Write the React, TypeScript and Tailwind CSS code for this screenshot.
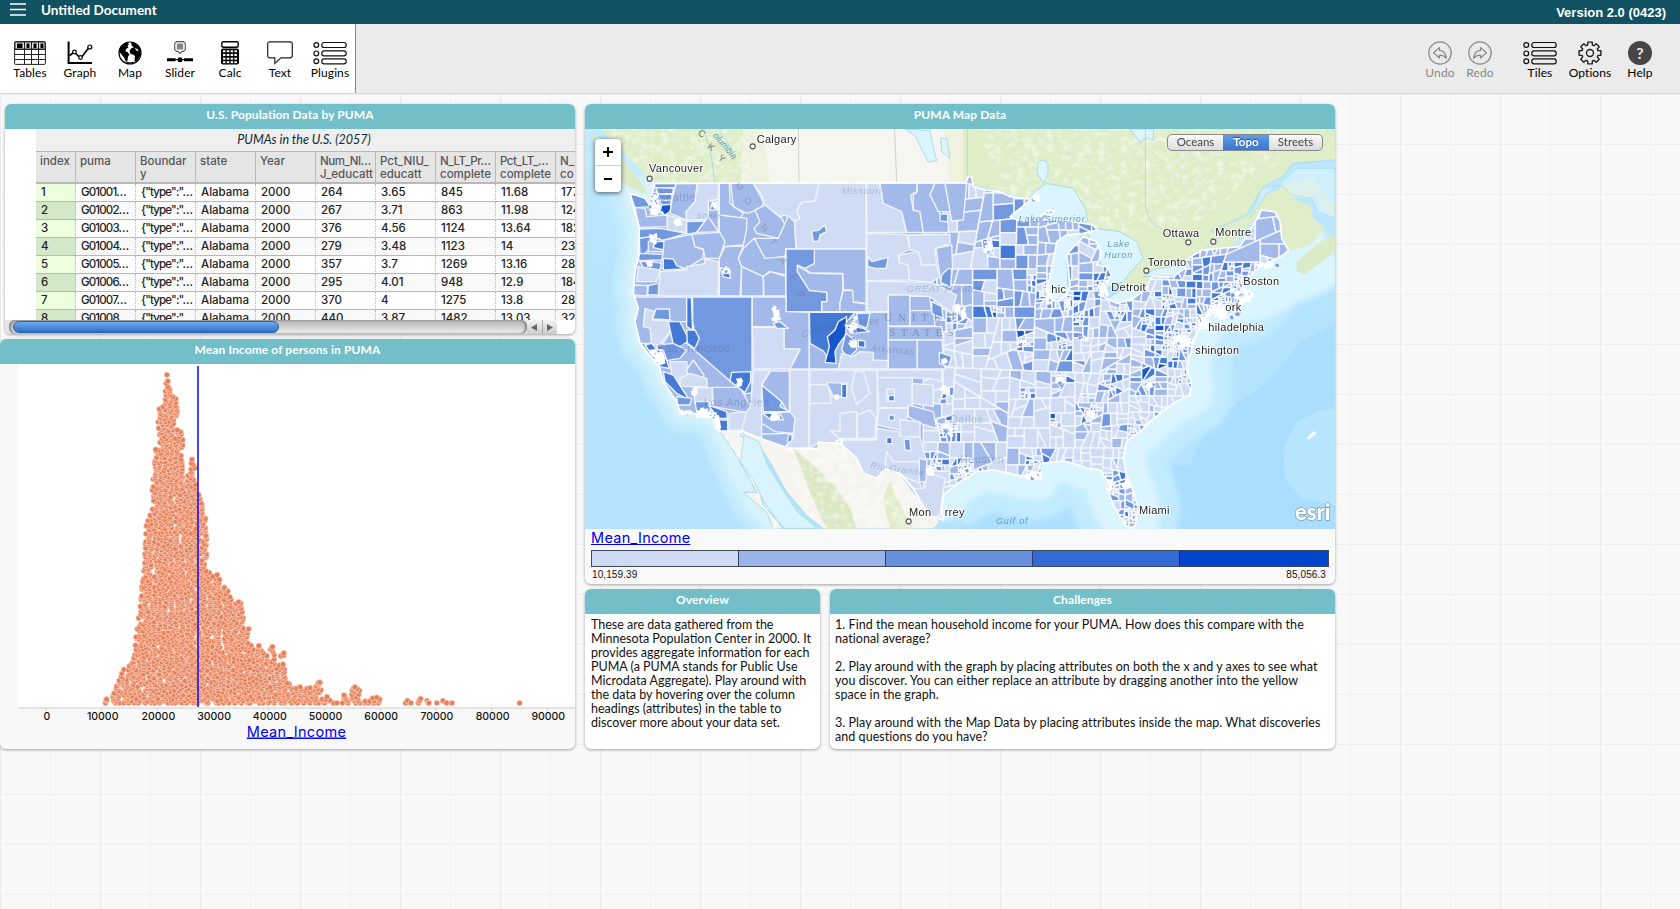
import React from 'react';

type Pt = [number, number];

function makeRandom(seed: number) {
  let s = seed;
  return () => {
    s = (s + 0x6d2b79f5) | 0;
    let t = Math.imul(s ^ (s >>> 15), 1 | s);
    t = (t + Math.imul(t ^ (t >>> 7), 61 | t)) ^ t;
    return ((t ^ (t >>> 14)) >>> 0) / 4294967296;
  };
}

/* ---------- toolbar ---------- */

function TableIcon() {
  return (
    <svg width="32" height="24" viewBox="0 0 32 24" fill="none" stroke="#222" strokeWidth="1">
      <rect x=".6" y=".6" width="30.8" height="22.8" rx="1" fill="#fff" />
      <path d="M1 1h30v7H1z" fill="#ddd" />
      <path d="M1 8.500h30M1 13.500h30M1 18.500h30M10.500 1v22M17.500 1v22M24.500 1v22" />
      <path d="M3 2.500h5.500v4.500H3zM12.500 2.500h3v4.500h-3zM19.500 2.500h3v4.500h-3zM26.500 2.500h3v4.500h-3z" fill="#000" stroke="none" />
    </svg>
  );
}
function GraphIcon() {
  return (
    <svg width="26" height="24" viewBox="0 0 26 24" fill="none" stroke="#000">
      <path d="M1.600 .5v21.400H25" strokeWidth="2" />
      <path d="M2.500 14.500l5-3.500 6 6.500L22 6.500" strokeWidth="1.700" />
      <g fill="#fff" strokeWidth="1.200">
        <circle cx="7.500" cy="11" r="1.800" />
        <circle cx="13.500" cy="16.500" r="1.800" />
        <circle cx="22.800" cy="6" r="2" />
      </g>
    </svg>
  );
}
function MapIcon() {
  return (
    <svg width="24" height="24" viewBox="0 0 24 24">
      <circle cx="12" cy="12" r="11" fill="#fff" stroke="#000" strokeWidth="1.200" />
      <path d="M2 7Q4 2.500 9 1.500L11 3 9.500 5l1 1.500L8 8l-.5 2.500 2 .5 2 2.500-1.500 2-.5 4-1.500 1.500-2-4.500-2.500-3L1.500 11z" fill="#000" />
      <path d="M13 2l3-.5Q21 4 22.500 9l.5 4-2 4-3 3.500-1.500-.5.5-5-2-1.500-2.500-.5-1-3 2-3 2.500-.5-2-1.500z" fill="#000" />
      <path d="M8 20.500l4 1 5-1-3 2.300H9z" fill="#000" />
      <path d="M16.500 7l3 1 1 2.500-2-1z" fill="#fff" />
    </svg>
  );
}
function SliderIcon() {
  return (
    <svg width="26" height="24" viewBox="0 0 26 24">
      <path d="M9.500 .6h7l1.800 1.800v6.200l-1.800 1.800H15l-2 2-2-2H9.500L7.700 8.600V2.400z" fill="#fff" stroke="#555" strokeWidth="1.100" />
      <path d="M9.800 2.500h6.400v6H9.800z" fill="#858585" />
      <path d="M0 17.200h8.500v3H0zM17 17.200h9v3h-9z" />
      <path d="M8 18.700h10" stroke="#000" strokeWidth="1" />
      <circle cx="13" cy="18.700" r="2.500" />
    </svg>
  );
}
function CalcIcon() {
  return (
    <svg width="20" height="24" viewBox="0 0 20 24">
      <rect x="1.800" y=".7" width="16.400" height="5.600" rx="1.500" fill="#fff" stroke="#000" strokeWidth="1.400" />
      <rect x="1" y="7.500" width="18" height="16" rx="2" />
      <g fill="#fff">
        {[9.3, 13, 16.7, 20.2].map((y) =>
          [3, 6.8, 10.6, 14.4].map((x) => <rect key={`${x}-${y}`} x={x} y={y} width="2.500" height="2" />),
        )}
      </g>
    </svg>
  );
}
function TextIcon() {
  return (
    <svg width="26" height="24" viewBox="0 0 26 24" fill="none" stroke="#222" strokeWidth="1.200">
      <path d="M3 .8h20q2.300 0 2.300 2.300v11.500q0 2.300-2.300 2.300H14L7.800 22.500V16.900H3Q.7 16.900.7 14.600V3.100Q.7.800 3 .8z" />
    </svg>
  );
}
function ListIcon() {
  return (
    <svg width="34" height="24" viewBox="0 0 34 24" fill="none" stroke="#111" strokeWidth="1.200">
      {[4, 12.4, 20.3].map((y) => (
        <g key={y}>
          <circle cx="3.300" cy={y} r="2.400" />
          <rect x="8.800" y={y - 2.5} width="24.400" height="5" rx="2.300" />
        </g>
      ))}
    </svg>
  );
}
function UndoIcon({ flip }: { flip?: boolean }) {
  return (
    <svg width="24" height="24" viewBox="0 0 24 24" fill="none" stroke="#888" strokeWidth="1.200">
      <circle cx="12" cy="12" r="11.200" />
      <path transform={flip ? 'translate(24 0) scale(-1 1)' : undefined} d="M5.500 11.800l6-5.200v2.800q6.300.3 6.800 8-2.300-3.300-6.800-3.200V17z" strokeLinejoin="round" />
    </svg>
  );
}
function GearIcon() {
  const pts: string[] = [];
  for (let i = 0; i < 8; i++) {
    const a = (i * Math.PI) / 4 - Math.PI / 2;
    [[-0.29, 8.3], [-0.2, 11.1], [0.2, 11.1], [0.29, 8.3]].forEach(([d, r]) => pts.push(`${12 + r * Math.cos(a + d)},${12 + r * Math.sin(a + d)}`));
  }
  return (
    <svg width="24" height="24" viewBox="0 0 24 24" fill="none" stroke="#222" strokeWidth="1.400" strokeLinejoin="round">
      <polygon points={pts.join(' ')} />
      <circle cx="12" cy="12" r="3.500" />
    </svg>
  );
}
function HelpIcon() {
  return (
    <span className="flex h-6 w-6 items-center justify-center rounded-full bg-[#464646] font-['Lato'] text-[16px] font-bold leading-none text-[#ececec]">?</span>
  );
}

function Tool({ icon, label, className = 'w-[50px]' }: { icon: React.ReactNode; label: string; className?: string }) {
  return (
    <button className={`flex shrink-0 flex-col items-center whitespace-nowrap pt-[17px] ${className}`}>
      <span className="flex h-6 items-center">{icon}</span>
      <span className="text-[12px] leading-[15px] tracking-[0.1px]">{label}</span>
    </button>
  );
}

/* ---------- shared panel ---------- */

function Panel({ title, className, children }: { title: string; className: string; children: React.ReactNode }) {
  return (
    <section className={`flex flex-col overflow-hidden rounded-[6px] shadow-[0_1px_3px_rgba(0,0,0,0.35)] ${className}`}>
      <h2 className="flex h-[25px] shrink-0 items-center justify-center bg-[#72bfca] pb-[3px] text-[12px] font-bold tracking-[0.1px] text-white">{title}</h2>
      {children}
    </section>
  );
}

/* ---------- case table ---------- */

const heads = [['puma'], ['Boundar', 'y'], ['state'], ['Year'], ['Num_NI…', 'J_educatt'], ['Pct_NIU_', 'educatt'], ['N_LT_Pr…', 'complete'], ['Pct_LT_…', 'complete'], ['N_', 'co']];
const rows = [
  ['G01001…', '264', '3.65', '845', '11.68', '177'],
  ['G01002…', '267', '3.71', '863', '11.98', '124'],
  ['G01003…', '376', '4.56', '1124', '13.64', '182'],
  ['G01004…', '279', '3.48', '1123', '14', '233'],
  ['G01005…', '357', '3.7', '1269', '13.16', '283'],
  ['G01006…', '295', '4.01', '948', '12.9', '184'],
  ['G01007…', '370', '4', '1275', '13.8', '280'],
  ['G01008…', '440', '3.87', '1482', '13.03', '321'],
];

function CaseTable() {
  return (
    <Panel title="U.S. Population Data by PUMA" className="ml-[5px] h-[230px] bg-white">
      <div className="ml-[31px] h-[191px] overflow-hidden font-['Inter']">
        <div className="flex h-[22px] items-center justify-center bg-[#efefef] pr-[3px] font-['Lato'] text-[12.500px] italic text-[#0e2a36]">PUMAs in the U.S. (2057)</div>
        <div className="flex h-[33px] w-[620px] border-b-2 border-t border-[#b8b8b8] bg-[#e5e5e5] text-[11.500px] font-medium leading-[12.500px] text-[#555]">
          <div className="w-[40px] border-r border-[#b8b8b8] pl-1 pt-[3px]">index</div>
          {heads.map((h, i) => (
            <div key={i} className="w-[60px] overflow-hidden whitespace-nowrap border-r border-[#b8b8b8] pl-1 pt-[3px]">
              {h.map((l) => (
                <div key={l} className={l.includes('…') ? 'tracking-[-0.45px]' : ''}>{l}</div>
              ))}
            </div>
          ))}
        </div>
        {rows.map((r, i) => (
          <div key={i} className={`flex h-[18px] w-[620px] text-[11.500px] font-medium leading-[17px] text-[#222] ${i % 2 ? 'bg-[#f9f9f9]' : 'bg-white'}`}>
            <div className={`w-[40px] border-b border-r border-b-[#b8b8b8] border-r-[#b8b8b8] pl-[5px] [border-right-style:dotted] ${i % 2 ? 'bg-[#d3e8c8]' : 'bg-[#ebffdf]'}`}>{i + 1}</div>
            {[r[0], '{"type":"…', 'Alabama', '2000', ...r.slice(1)].map((c, j) => (
              <div key={j} className={`w-[60px] overflow-hidden whitespace-nowrap border-b border-r border-b-[#b8b8b8] border-r-[#b8b8b8] pl-[5px] [border-right-style:dotted] ${c.includes('…') ? 'tracking-[-0.85px]' : ''}`}>{c}</div>
            ))}
          </div>
        ))}
      </div>
      <div className="flex h-[14px] w-[552px] bg-[#e4e4e4]">
        <div className="ml-1 flex h-[14px] w-[518px] shrink-0 items-center rounded-[6px] bg-gradient-to-b from-[#b0b0b0] to-[#f2f2f2] pl-1 shadow-[inset_2px_0_2px_#888,inset_-2px_0_2px_#888]">
          <div className="h-[12px] w-[266px] rounded-full border border-[#2a5fae] bg-gradient-to-b from-[#6fa9f3] to-[#2f6fc4]" />
        </div>
        <div className="flex h-[14px] flex-1 bg-gradient-to-b from-[#f4f4f4] to-[#ccc]">
          <div className="flex flex-1 items-center justify-center border-r border-[#aaa]">
            <svg width="6" height="7"><path d="M6 0v7L0 3.500z" fill="#666" /></svg>
          </div>
          <div className="flex flex-1 items-center justify-center">
            <svg width="6" height="7"><path d="M0 0v7l6-3.500z" fill="#666" /></svg>
          </div>
        </div>
      </div>
    </Panel>
  );
}

/* ---------- dot plot ---------- */

const envelope: Pt[] = [
  [272, 1119], [283, 1108], [300, 1095], [318, 1045], [332, 1008], [352, 1000], [365, 895], [378, 765], [385, 680], [390, 560], [402, 545], [408, 350], [417, 350], [420, 234], [437, 222],
  [442, 130], [454, 128], [456, 180], [462, 203], [470, 210], [472, 295], [485, 308], [489, 435], [502, 430], [508, 390], [517, 382], [521, 490], [533, 493], [540, 545], [548, 550],
  [550, 722], [560, 730], [580, 728], [588, 770], [602, 772], [613, 803], [625, 822], [636, 815], [642, 822], [650, 890], [661, 895], [667, 945], [680, 945], [693, 950], [706, 990],
  [715, 950], [725, 940], [735, 1010], [745, 965], [754, 970], [760, 1055], [772, 1062], [780, 1085], [795, 1050], [805, 1080], [820, 1075], [830, 1062], [851, 1050], [858, 1105],
  [878, 1100], [892, 1117], [898, 1125], [908, 1125], [913, 1095], [930, 1107], [937, 1069], [957, 1081], [965, 1105], [980, 1113], [995, 1100], [1012, 1105], [1016, 1130],
];
const strays: Pt[] = [[1078, 1119], [1083, 1112], [1092, 1119], [1112, 1119], [1114, 1113], [1118, 1106], [1135, 1112], [1138, 1119], [1140, 1119], [1161, 1119], [1177, 1112], [1187, 1119], [1201, 1119], [1381, 1119]];
const SX = 2.6576;

function topAt(x: number) {
  for (let i = 1; i < envelope.length; i++) {
    const [x0, y0] = envelope[i - 1];
    const [x1, y1] = envelope[i];
    if (x <= x1) return y0 + ((y1 - y0) * (x - x0)) / (x1 - x0);
  }
  return 2000;
}

const dots: Pt[] = (() => {
  const rnd = makeRandom(7);
  const out: Pt[] = [];
  for (let y = 1119; y > 120; y -= 6.2) {
    for (let bx = 272; bx < 1014; bx += 14.2) {
      const x = bx + (rnd() - 0.5) * 14;
      const yy = y === 1119 ? y : y + (rnd() - 0.5) * 4;
      if (x >= 270 && yy >= topAt(x) - 2) out.push([x / SX, yy / 3 + 330]);
    }
  }
  strays.forEach(([x, y]) => out.push([x / SX, y / 3 + 330]));
  return out;
})();

function DotPlot() {
  return (
    <Panel title="Mean Income of persons in PUMA" className="h-[410px] bg-[#f8f8f8]">
      <svg width="575" height="385" viewBox="0 364 575 385" className="font-['Inter']">
        <rect x="18" y="364" width="557" height="344" fill="#fff" />
        <path d="M18 708H575" stroke="#dcdcdc" strokeWidth="1.500" />
        <g fill="#e6805a" stroke="#fbd6c6" strokeWidth=".7">
          {dots.map(([x, y], i) => (
            <circle key={i} cx={x.toFixed(1)} cy={y.toFixed(1)} r="2.800" />
          ))}
        </g>
        <path d="M198 366V707" stroke="#1a12f0" strokeWidth="1.600" />
        {[0, 1, 2, 3, 4, 5, 6, 7, 8, 9].map((i) => (
          <g key={i}>
            <path d={`M${46 + i * 55.7} 708v3`} stroke="#ccc" />
            <text x={47 + i * 55.7} y="719.500" textAnchor="middle" fontSize="10.500" fontWeight="500" fill="#111">{i * 10000}</text>
          </g>
        ))}
        <text x="296.500" y="736.500" textAnchor="middle" fontSize="14.500" letterSpacing=".3" fill="#0000f0" textDecoration="underline">Mean_Income</text>
      </svg>
    </Panel>
  );
}

/* ---------- choropleth map ---------- */

const shade = ['#d0dcf4', '#a2b9e9', '#7298df', '#447ad6', '#1757cb'];

const pacific = '222,265 215,310 215,340 195,310 150,295 178,400 175,490 165,530 160,595 175,640 165,680 180,745 200,770 240,820 250,860 290,920 300,950 380,960 400,970 420,1010';
const atlantic =
  '1090,1275 1085,1250 1090,1200 1140,1160 1190,1130 1240,1125 1290,1135 1330,1145 1370,1150 1380,1105 1450,1098 1480,1105 1520,1120 1560,1125 1585,1160 1585,1190 1600,1230 1620,1265 1645,1298 1665,1295 1675,1240 1660,1190 1640,1140 1630,1090 1640,1040 1680,1010 1710,980 1740,955 1780,925 1830,900 1835,870 1820,815 1830,780 1845,725 1860,700 1880,665 1930,640 1990,620 2020,600 1990,580 2000,550 2040,515 2110,480 2125,465';
const usOutline = `${pacific} 490,1010 620,1060 715,1060 715,1042 780,1045 830,1090 850,1135 890,1150 915,1122 960,1135 1000,1180 1020,1220 1055,1265 ${atlantic} 2105,430 2100,380 2085,350 2045,345 2020,390 1980,455 1865,465 1810,500 1815,520 1780,545 1715,545 1700,580 1660,610 1610,625 1570,605 1570,580 1595,540 1580,515 1550,510 1565,475 1550,440 1510,425 1485,450 1460,480 1465,520 1470,570 1460,600 1430,620 1410,610 1402,580 1415,520 1425,470 1430,440 1460,420 1510,415 1550,405 1540,390 1480,380 1430,375 1390,375 1425,350 1405,345 1370,375 1325,380 1290,365 1355,312 1290,305 1260,290 1215,285 1180,275 1175,245 1165,245 1158,262`;

const metros: [number, number, number][] = [
  [1225, 460, 16], [1410, 590, 26], [1570, 575, 26], [1360, 550, 14], [1245, 640, 14], [1325, 750, 20], [1450, 750, 18], [1440, 850, 16], [1535, 950, 22], [1600, 870, 16], [1700, 865, 20],
  [1790, 740, 40], [1860, 685, 30], [1930, 650, 45], [1990, 600, 35], [1980, 560, 20], [1620, 650, 18], [1700, 680, 18], [1500, 670, 18], [1105, 1000, 24], [1160, 1130, 28], [1360, 1120, 24],
  [1590, 1180, 24], [1660, 1260, 24], [1640, 1170, 14], [1090, 890, 14], [1130, 680, 14], [1420, 980, 14], [1340, 900, 12], [1070, 1100, 18], [1810, 840, 16], [1660, 1000, 14], [1760, 620, 18],
  [1955, 510, 14], [1470, 620, 18], [1290, 1000, 10],
];

const area = (p: Pt[]) => Math.abs(p.reduce((s, [x, y], i) => s + x * p[(i + 1) % p.length][1] - p[(i + 1) % p.length][0] * y, 0)) / 2;

/* Districts come from repeatedly cutting the land in two, with smaller pieces around the cities. */
const cells: { pts: string; c: number }[] = (() => {
  const rnd = makeRandom(2024);
  const out: { pts: string; c: number }[] = [];
  const visit = (poly: Pt[], depth: number) => {
    const xs = poly.map((p) => p[0]);
    const ys = poly.map((p) => p[1]);
    const x = xs.reduce((a, b) => a + b) / xs.length;
    const y = ys.reduce((a, b) => a + b) / ys.length;
    const w = Math.max(...xs) - Math.min(...xs);
    const h = Math.max(...ys) - Math.min(...ys);
    let near = 9;
    metros.forEach(([mx, my, r]) => (near = Math.min(near, Math.hypot(mx - x, my - y) / r)));
    let side = 46 - Math.max(0, x - 1060) * 0.022;
    if (x > 1400 && y > 540) side -= 5;
    if (x < 1330 && y < 560) side += 10;
    if (y > 800 && x < 1560) side += 4;
    if (x > 1985 && y < 500) side = 70;
    if (near < 1.1) side = 12;
    else if (near < 2.2) side = 22;
    const target = side * side * (0.75 + rnd() * 0.9);
    if (depth < 16 && area(poly) > target) {
      const tilt = depth < 3 ? 0.04 : rnd() < 0.45 ? 0 : (rnd() - 0.5) * (y > 620 || x > 1500 ? 1.1 : 0.6);
      const a = (w > h ? 0 : Math.PI / 2) + tilt;
      const nx = Math.cos(a);
      const ny = Math.sin(a);
      const proj = poly.map((p) => p[0] * nx + p[1] * ny);
      const lo = Math.min(...proj);
      const lim = lo + (Math.max(...proj) - lo) * (0.36 + rnd() * 0.28);
      const mid: Pt[] = [];
      const A: Pt[] = [];
      const B: Pt[] = [];
      poly.forEach((p, i) => {
        const j = (i + 1) % poly.length;
        const fp = proj[i] - lim;
        const fq = proj[j] - lim;
        (fp <= 0 ? A : B).push(p);
        if (fp <= 0 !== fq <= 0) {
          const t = fp / (fp - fq);
          const q: Pt = [p[0] + (poly[j][0] - p[0]) * t, p[1] + (poly[j][1] - p[1]) * t];
          mid.push(q);
          A.push(q);
          B.push(q);
        }
      });
      visit(A, depth + 1);
      visit(B, depth + 1);
      return;
    }
    const v = rnd();
    let c = y < 760 ? (v < 0.2 ? 0 : v < 0.76 ? 1 : v < 0.95 ? 2 : 3) : v < 0.8 ? 0 : v < 0.95 ? 1 : 2;
    if (x > 1530 && x < 1790 && y > 570 && y < 800) c = v < 0.7 ? 0 : v < 0.92 ? 1 : 2;
    if (x < 1330 && y > 660 && y < 790) c = v < 0.6 ? 0 : v < 0.9 ? 1 : 2;
    if (x > 1560 && x < 1830 && y > 830 && y < 910) c = v < 0.45 ? 0 : v < 0.85 ? 1 : 2;
    if (near < 2.2) c = v < 0.22 ? 0 : v < 0.52 ? 1 : v < 0.78 ? 2 : v < 0.95 ? 3 : 4;
    if (x > 1840 && x < 2010 && y > 440 && y < 620) c = v < 0.4 ? 1 : v < 0.8 ? 2 : 3;
    if (x > 1985 && y < 500) c = v < 0.5 ? 0 : 1;
    const rough = poly.map(([px, py]) => `${px.toFixed(0)},${py.toFixed(0)}`);
    out.push({ pts: rough.join(' '), c });
  };
  visit([[1030, 230], [2140, 230], [2140, 1310], [1030, 1310]], 0);
  return out;
})();

const west: [number, string][] = [
  [2, '150,297 215,310 215,335 165,338'],
  [1, '165,338 195,340 200,365 262,360 262,395 178,397'],
  [2, '224,266 288,266 285,278 224,278'],
  [2, '228,278 280,280 278,296 232,296'],
  [2, '232,298 276,298 274,316 238,316'],
  [2, '238,316 274,316 270,335 245,330'],
  [4, '245,330 275,328 270,350 255,360 240,350'],
  [1, '288,266 352,265 345,320 318,350 320,375 270,355 275,320'],
  [0, '262,360 320,378 318,412 262,405'],
  [0, '352,265 415,265 415,320 390,315 385,375 320,375 318,350 345,320'],
  [1, '385,320 415,312 415,410 385,380'],
  [3, '400,315 412,320 412,345 390,345'],
  [2, '320,380 375,378 350,412 320,418'],
  [1, '350,412 385,365 415,410'],
  [1, '418,265 448,265 450,325 490,355 480,370 418,360'],
  [1, '452,265 520,265 550,320 545,340 500,355 460,335'],
  [1, '418,360 500,370 500,400 490,450 430,455 418,410'],
  [0, '520,265 717,265 705,318 665,322 650,348 660,370 643,380 615,360 600,365 555,330 545,300'],
  [0, '717,265 858,265 858,462 650,462 643,380 660,370 650,348 665,322 705,318'],
  [1, '525,345 555,330 605,370 617,392 595,430 530,415 522,400 540,380'],
  [1, '523,430 595,430 625,362 643,380 648,460 618,462 615,485 555,492 530,450'],
  [2, '695,408 715,406 735,390 740,410 720,420 716,438 700,440'],
  [2, '178,402 240,400 318,415 250,436 215,425 178,430'],
  [2, '178,430 215,425 205,465 180,490'],
  [1, '205,440 235,430 250,440 252,470 205,470'],
  [3, '225,440 255,440 252,465 220,458'],
  [2, '178,475 252,478 248,495 175,497'],
  [1, '252,435 335,418 345,455 372,465 368,490 320,520 240,520 250,470'],
  [2, '180,500 215,500 245,505 238,530 190,518'],
  [3, '250,490 280,492 290,512 315,522 250,525'],
  [1, '335,418 420,412 435,440 418,490 375,490 370,462 345,455'],
  [0, '320,515 375,505 372,492 415,500 415,603 235,603 240,530 320,525'],
  [0, '175,515 240,525 230,560 170,560'],
  [1, '160,570 203,572 200,603 160,600'],
  [2, '205,572 237,565 235,600 203,600'],
  [1, '418,490 435,455 490,453 475,490 485,515 480,603 418,603'],
  [3, '420,518 445,525 452,550 430,545'],
  [1, '490,460 523,430 555,490 615,485 618,540 568,530 550,545 485,515 475,490'],
  [1, '485,515 550,545 550,603 483,603'],
  [1, '550,545 570,530 618,545 618,603 552,603'],
  [2, '618,462 858,462 858,650 618,650'],
  [1, '703,462 858,462 858,625 820,620 815,585 790,585 788,535 690,533 675,520 703,505'],
  [1, '652,512 690,535 788,537 788,590 780,625 780,650 725,650 725,620 740,620 740,592 688,587 652,530'],
  [1, '790,587 818,587 820,622 858,627 858,650 780,650 780,625'],
  [2, '618,462 703,462 703,505 675,520 652,510 652,530 688,587 740,592 740,620 725,620 725,650 618,650'],
  [1, '165,606 320,606 320,680 290,680 250,745 180,745 165,680'],
  [0, '195,640 225,650 215,675 290,680 240,750 215,750 210,700 190,695'],
  [2, '228,642 268,642 270,675 218,672'],
  [3, '320,608 334,608 338,705 320,695'],
  [2, '338,606 516,606 516,893 495,897 320,745 345,720 338,680'],
  [3, '265,680 300,680 320,720 330,735 300,755 280,750'],
  [3, '320,705 345,705 358,730 345,760 322,745'],
  [3, '195,750 215,745 232,765 215,778'],
  [2, '230,750 280,745 320,765 300,790 240,800'],
  [3, '225,765 250,765 268,820 240,815'],
  [0, '270,800 320,800 325,850 300,870 275,840'],
  [1, '320,825 340,795 372,840 365,865 330,860'],
  [0, '300,850 330,835 380,850 382,876 300,874'],
  [3, '250,830 280,840 300,872 328,915 290,895 255,860'],
  [0, '340,878 397,878 397,925 345,925'],
  [1, '397,877 480,877 512,935 500,952 400,935'],
  [2, '290,905 335,910 330,930 292,930'],
  [2, '345,920 385,920 398,945 350,950'],
  [3, '385,930 440,950 442,970 415,970'],
  [3, '418,975 443,975 443,1008 420,1008'],
  [0, '447,955 500,950 500,980 490,1005 447,1005'],
  [3, '455,832 512,830 512,860 495,893 450,858'],
  [1, '517,606 618,606 618,650 688,652 688,822 630,822 660,765 612,762 612,695 517,695'],
  [0, '517,697 612,697 612,762 660,762 630,822 520,822'],
  [2, '580,685 600,680 625,700 590,700'],
  [1, '688,652 925,652 925,822 688,822'],
  [3, '688,652 825,652 800,680 770,695 750,800 730,768 690,745'],
  [4, '775,680 800,665 797,720 775,750 765,770 768,805 735,802 748,755 742,725 765,705'],
  [2, '797,715 825,735 830,765 805,790 785,765'],
  [3, '795,690 850,700 868,710 815,715'],
  [3, '835,735 855,738 855,758 835,755'],
  [2, '830,655 870,655 860,700 835,690'],
  [0, '785,775 820,785 840,770 880,772 880,795 925,797 925,822 775,822'],
  [0, '520,825 570,825 545,870 545,1035 485,1005 500,950 512,935'],
  [1, '572,828 628,828 628,960 605,920 545,870'],
  [2, '545,870 605,920 600,935 630,950 550,950'],
  [1, '545,955 650,950 640,1015 585,1010 545,985'],
  [3, '548,955 600,955 610,975 570,972'],
  [1, '545,1017 640,1015 635,1035 615,1055 545,1032'],
  [2, '625,1020 636,1018 636,1042 622,1040'],
  [0, '630,825 687,825 687,1060 640,1060 620,1055 640,1030 645,970 630,950'],
  [0, '690,825 892,825 892,1035 782,1035 780,1045 715,1045 687,1060'],
  [0, '690,868 745,870 755,925 690,925'],
  [1, '740,862 800,865 800,905 760,905'],
  [3, '785,868 800,868 800,908 785,908'],
  [0, '825,830 815,880 830,928 870,895 850,830'],
  [0, '750,1008 780,1008 780,955 830,950 830,1030 780,1030'],
  [0, '832,960 870,945 888,970 885,1030 832,1030'],
  [0, '892,825 1085,825 1085,860 1050,850 892,848'],
  [0, '892,848 997,848 997,938 897,938'],
  [0, '997,865 1060,870 1060,935 997,925'],
  [0, '897,940 985,940 980,975 960,1005 892,990'],
  [1, '985,930 1060,950 1070,1000 1020,985 985,965'],
  [0, '960,975 1020,980 1020,1025 962,1025'],
  [0, '782,1035 890,1035 890,1000 955,1010 960,1025 1020,1027 1040,1100 1018,1160 1035,1215 1000,1190 915,1130 890,1170 820,1140'],
  [0, '920,1070 940,1100 1018,1100 1020,1165 960,1140 915,1120'],
  [1, '1018,1090 1040,1095 1040,1160 1018,1160'],
  [0, '1040,1130 1095,1150 1080,1260 1055,1270 1000,1180 1035,1180'],
  [2, '972,1033 990,1033 992,1068 975,1065'],
  [0, '920,882 943,882 943,918 922,918'],
  [3, '926,902 943,902 943,918 926,918'],
  [2, '927,960 943,960 943,976 927,976'],
  [3, '920,1028 936,1028 936,1046 920,1046'],
  [0, '860,265 898,265 910,325 965,350 978,412 860,412'],
  [1, '900,265 1012,265 1010,290 992,300 1000,345 1020,350 1030,412 980,412 965,350 910,325'],
  [1, '1012,265 1065,265 1050,300 1070,330 1080,355 1105,385 1105,412 1030,412 1020,350 1000,345 1000,300 1012,290'],
  [1, '1065,265 1095,265 1112,350 1075,350 1050,300'],
  [2, '1080,357 1103,357 1103,380 1080,378'],
  [1, '1095,265 1160,265 1150,375 1115,378'],
  [0, '860,415 980,418 990,462 955,480 958,503 985,510 988,555 860,557'],
  [2, '863,485 876,500 925,487 918,520 885,520 863,514'],
  [0, '985,420 1110,418 1110,445 1065,460 1070,510 1025,510 1015,470 990,465'],
  [0, '958,480 1015,470 1025,510 1070,510 1080,545 1055,562 988,555 985,510 958,503'],
  [1, '1068,460 1115,450 1118,520 1110,577 1082,560'],
  [2, '1085,540 1105,520 1115,522 1112,577 1082,562'],
  [0, '862,558 1055,562 1130,600 1115,655 1050,605 925,600 925,650 862,650'],
  [1, '925,600 990,600 990,693 925,693'],
  [1, '990,603 1048,605 1055,647 990,647'],
  [1, '990,647 1060,647 1065,693 990,693'],
  [2, '1055,620 1085,635 1090,670 1055,655'],
  [1, '925,695 1085,695 1090,735 925,735'],
  [1, '925,735 1012,735 1012,822 925,822'],
  [1, '1012,735 1085,735 1095,822 1012,822'],
  [2, '1078,772 1115,785 1105,815 1078,805'],
];

const specks: [number, number, number, number][] = [
  [225, 310, 16, 30], [225, 345, 22, 16], [222, 430, 14, 14], [405, 330, 6, 8], [437, 530, 9, 12], [590, 655, 12, 26], [820, 685, 14, 30], [240, 790, 16, 24], [218, 775, 14, 12], [345, 890, 8, 12],
  [480, 862, 12, 9], [585, 965, 14, 10], [380, 955, 30, 14], [410, 985, 8, 26], [1105, 1005, 16, 18], [770, 905, 9, 7], [1090, 795, 9, 7], [1132, 640, 10, 14], [292, 382, 10, 7], [208, 508, 8, 6],
  [1225, 460, 14, 18], [1410, 600, 10, 26], [1570, 585, 16, 14], [1930, 650, 60, 22], [1985, 605, 38, 22], [1870, 685, 28, 18], [1800, 740, 30, 18], [1160, 1130, 16, 12], [1360, 1140, 26, 14],
  [1590, 1180, 9, 20], [1535, 955, 14, 12], [2060, 510, 40, 8], [1050, 1125, 10, 14], [1325, 745, 12, 12], [820, 745, 12, 18], [1370, 310, 16, 8], [1150, 660, 8, 24], [1095, 885, 12, 10], [780, 1040, 7, 7],
  [320, 952, 22, 5], [1460, 630, 8, 12], [1710, 870, 14, 8], [1440, 860, 8, 12], [1640, 1165, 10, 14], [1510, 730, 12, 8],
];

const scatter: { pts: string; c: string }[] = (() => {
  const rnd = makeRandom(99);
  const out: { pts: string; c: string }[] = [];
  specks.forEach(([x, y, rx, ry]) => {
    const n = Math.round((rx * ry) / 20) + 6;
    for (let i = 0; i < n; i++) {
      const cx = x + (rnd() + rnd() - 1) * rx;
      const cy = y + (rnd() + rnd() - 1) * ry;
      const s = 3 + rnd() * 6;
      const p = [0, 1, 2, 3].map((k) => `${(cx + Math.cos(k * 1.57 + rnd()) * s).toFixed(0)},${(cy + Math.sin(k * 1.57 + rnd()) * s).toFixed(0)}`);
      out.push({ pts: p.join(' '), c: rnd() < 0.88 ? '#fff' : shade[2] });
    }
  });
  return out;
})();

function City({ x, y, children, dot }: { x: number; y: number; children: string; dot?: Pt }) {
  return (
    <>
      {dot && <circle cx={dot[0]} cy={dot[1]} r="7.500" fill="#fff" stroke="#555" strokeWidth="3.500" />}
      <text x={x} y={y} fontSize="33" letterSpacing=".9" fill="#222" stroke="#fff" strokeWidth="5" strokeLinejoin="round" paintOrder="stroke">{children}</text>
    </>
  );
}

function PumaMap() {
  return (
    <svg width="750" height="400" viewBox="15 102 2250 1200" className="block font-['Liberation_Sans']">
      <defs>
        <clipPath id="us"><polygon points={usOutline} /></clipPath>
        <filter id="soft" x="-20%" y="-20%" width="140%" height="140%"><feGaussianBlur stdDeviation="9" /></filter>
        <filter id="terrain" x="0" y="0" width="100%" height="100%">
          <feTurbulence type="fractalNoise" baseFrequency=".045 .055" numOctaves="5" seed="4" />
          <feColorMatrix values="0 0 0 0 1  0 0 0 0 1  0 0 0 0 1  2.4 0 0 0 -1.05" />
          <feComposite in2="SourceGraphic" operator="in" />
        </filter>
        <linearGradient id="pac" x1="0" x2="0" y1="0" y2="1">
          <stop offset="0" stopColor="#c0eafd" />
          <stop offset=".5" stopColor="#b3e3fd" />
          <stop offset="1" stopColor="#b3e3fd" />
        </linearGradient>
      </defs>
      <rect x="15" y="102" width="2250" height="1200" fill="url(#pac)" />
      <g fill="#abddfe">
        <path d="M2265 690L2160 740 2110 810 2040 880 1890 980 1850 1060 1830 1110 1780 1110 1790 1220 1760 1302H2265z" />
        <path d="M1140 1302L1240 1240 1380 1180 1460 1190 1510 1240 1520 1302z" opacity=".8" />
      </g>
      <path d="M2110 1060l40-80 60-30 55-10v290l-100-20-50-60z" fill="#b7e5fe" />
      <path d="M2180 1030l20-22 12 6-26 22z" fill="#eefaff" />
      <g fill="none" strokeLinejoin="round" filter="url(#soft)">
        <polyline points={atlantic} stroke="#c2ebff" strokeWidth="250" />
        <polyline points={atlantic} stroke="#dbf5fe" strokeWidth="130" />
        <path d="M2000 600L2180 520 2265 480" stroke="#dbf5fe" strokeWidth="170" />
        <polyline points={`60,150 140,280 ${pacific} 460,1110 520,1230 590,1302`} stroke="#c6ecfd" strokeWidth="120" />
        <polyline points={`60,150 140,280 ${pacific} 460,1110 520,1230 590,1302`} stroke="#d8f3fc" strokeWidth="50" />
      </g>
      <g>
        <path d="M65 102L100 150 150 190 210 255 222 266 1160 262 1355 312 1290 400 1450 430 1560 480 1640 590 1600 620 1700 590 1820 500 1880 460 2000 365 2060 300 2140 260 2200 250 2220 275 2190 308 2130 310 2190 330 2200 370 2235 400 2190 450 2130 468 2090 380 2050 340 1950 460 1860 470 2000 365 2050 280 2110 245 2140 205 2265 195V102z" fill="#dfedc9" />
        <path d="M500 102H1090L1140 265H520z" fill="#f6f5f0" />
        <path d="M490 102l60 0 20 165-90 0zM1090 102h60v162h-40z" fill="#eef2df" />
        <path d="M30 110l60 40 60 70 50 65-10 12-55-30-70-80z" fill="#dbeac6" />
        <path d="M2150 500l70-60 45-20v50l-90 68-25-10zM2200 270l65 60v40l-40-30z" fill="#dcebc6" />
        <path d="M420 1010l70 0 60 220 60 72h-30l-20-50-70-60 40 0-60-110zM490 1010l130 50h95v-18l65 3 50 45 20 45 40 15 25-28 45 13 60 85 60 60-20 22H730l-50-40-60-70-50-90-40-60-50-20z" fill="#f5f4ee" stroke="#a5d8e6" strokeWidth="3" />
        <path d="M640 1060l70 60 60 60 40 60 20 62h-90l-50-110z" fill="#dce7c4" />
        <path d="M930 1150l20 60 50 92h-70l-20-90z" fill="#e2eacb" />
        <path d="M492 1020l45 20 25 70 50 80 40 60 60 50h-100l-60-80-30-60-40-60z" fill="#daf4fd" stroke="#9fd6ea" strokeWidth="2" />
        <path d="M65 102L100 150 150 190 210 255 222 266 420 265 520 265 490 102zM1200 102h900v100l-250 180-300 60-300-160z M420 1010l30 20 100 190 60 82h-30l-20-50z M620 1062h95l65-15 70 100 130-10 90 160H730l-60-50z" filter="url(#terrain)" fill="#fff" opacity=".6" />
      </g>
      <g fill="#dbf4fe" stroke="#a8dcec" strokeWidth="3">
        <path d="M1290 365l80-80 30-20 80 15 35 60 10 40-50 5-110-15-60 30z" />
        <path d="M1372 205q15-20 32 0v30l-12 30-20-30z" />
        <path d="M1650 102l30 40 20-15 20 10 0-35z" />
        <path d="M1540 400l80 10 50 30 20 50-30 30-30 40-50 20-10-60-50-110z" />
        <path d="M1410 620l-20-120 50-80 70-5-50 70 5 120zM1570 620l60-40 70-10-30 45-80 20zM1690 545l40-25 90-10-10 30z" />
        <path d="M2265 195l-125 10-30 40-60 30-50 85-110 50" fill="none" stroke="#b3e2f0" strokeWidth="5" />
        <path d="M975 102l30 20 20 40 20 40 25-5-10-40-10-50zM1082 130l18 0 10 60-25-20z" />
        <path d="M370 102l20 60 15 100M420 110l40 60" fill="none" />
        <path d="M2010 370l50-75 60-45 30-30h115v150l-50-20-20-40-60-10-30-30-60 10z" opacity=".65" />
      </g>
      <path d="M655 102l2 160M944 102l6 160M1162 102v140M1696 102v230q10 60 50 70t80 40" stroke="#d0d0d0" strokeWidth="3" fill="none" />
      <polygon points={usOutline} fill={shade[1]} />
      <g clipPath="url(#us)" strokeLinejoin="round">
        <g stroke="#f1f5fc" strokeWidth="4.600">
          {cells.map((c, i) => (
            <polygon key={i} points={c.pts} fill={shade[c.c]} />
          ))}
        </g>
        <g stroke="#eef3fc" strokeWidth="4.200">
          {west.map(([c, p], i) => (
            <polygon key={i} points={p} fill={shade[c]} />
          ))}
        </g>
      </g>
      <polygon points={usOutline} fill="none" stroke="#fff" strokeWidth="5" strokeLinejoin="round" />
      <g>
        {scatter.map((s, i) => (
          <polygon key={i} points={s.pts} fill={s.c} stroke="#fff" strokeWidth="1.500" />
        ))}
      </g>
      <g fill="#3c5680" opacity=".28" fontSize="32" letterSpacing="2">
        <text x="235" y="317">Seattle</text>
        <text x="232" y="772" letterSpacing="1">San Francisco</text>
        <text x="372" y="932">Los Angeles</text>
        <text x="785" y="690">Denver</text>
        <text x="785" y="298" fontStyle="italic" fontSize="28">Missouri</text>
        <text x="350" y="370" fontStyle="italic" fontSize="24">Snake</text>
        <text x="668" y="728" fontStyle="italic" transform="rotate(-18 668 728)" fontSize="28">Colorado</text>
        <text x="872" y="768" fontStyle="italic" fontSize="28" transform="rotate(5 872 768)">Arkansas</text>
        <text x="870" y="1120" fontStyle="italic" fontSize="28" transform="rotate(8 870 1120)">Rio Grande</text>
        <text x="980" y="592" fontStyle="italic" fontSize="28">GREAT PLAINS</text>
        <text x="1110" y="985">Dallas</text>
        <text x="1140" y="1105">Houston</text>
      </g>
      <g fill="#3c5680" opacity=".4" fontSize="34" fontFamily="Liberation Serif">
        <text x="912" y="678" letterSpacing="17">UNITED</text>
        <text x="928" y="724" letterSpacing="15">STATES</text>
      </g>
      <g fill="#777" fontSize="28">
        <text transform="translate(352 118) rotate(35)">C</text>
        <text transform="translate(380 158) rotate(38)">K</text>
        <text transform="translate(412 192) rotate(40)">Y</text>
        <g opacity=".45">
          <text transform="translate(463 275) rotate(40)">M</text>
          <text transform="translate(490 318) rotate(40)">O</text>
          <text transform="translate(540 398) rotate(45)">N</text>
          <text transform="translate(567 440) rotate(55)">T</text>
          <text transform="translate(598 495) rotate(60)">A</text>
          <text transform="translate(630 545) rotate(60)">I</text>
          <text transform="translate(650 590) rotate(70)">S</text>
        </g>
      </g>
      <g fill="#5d9dbd" fontStyle="italic" fontSize="27" letterSpacing="2.500">
        <text transform="translate(398 122) rotate(50)" letterSpacing="0">olumbia</text>
        <text x="1316" y="380">Lake Superior</text>
        <text x="1582" y="455">Lake</text>
        <text x="1573" y="488">Huron</text>
        <text x="1248" y="1288">Gulf of</text>
      </g>
      <City x={530} y={143} dot={[518, 154]}>Calgary</City>
      <City x={207} y={230} dot={[209, 251]}>Vancouver</City>
      <City x={1748} y={425} dot={[1825, 442]}>Ottawa</City>
      <City x={1906} y={423} dot={[1900, 440]}>Montre</City>
      <City x={1703} y={512} dot={[1699, 527]}>Toronto</City>
      <City x={1594} y={587}>Detroit</City>
      <City x={1414} y={593}>hic</City>
      <City x={1990} y={569}>Boston</City>
      <City x={1936} y={648}>ork</City>
      <City x={1885} y={707}>hiladelphia</City>
      <City x={1846} y={776}>shington</City>
      <City x={1677} y={1256}>Miami</City>
      <City x={987} y={1263} dot={[986, 1279]}>Mon</City>
      <City x={1094} y={1263}>rrey</City>
      <text x="2145" y="1275" fontFamily="Lato" fontWeight="900" fontSize="66" fill="#fff" stroke="#7a99aa" strokeWidth="4" paintOrder="stroke">esri</text>
    </svg>
  );
}

function MapPanel() {
  return (
    <Panel title="PUMA Map Data" className="h-[480px] bg-[#f9f9f9]">
      <div className="relative h-[400px] shrink-0 overflow-hidden">
        <PumaMap />
        <div className="absolute left-[10px] top-[10px] w-[26px] overflow-hidden rounded-[4px] bg-white shadow-[0_1px_5px_rgba(0,0,0,0.65)]">
          <div className="flex h-[27px] items-center justify-center border-b border-[#ccc]">
            <svg width="10" height="10"><path d="M0 5h10M5 0v10" stroke="#000" strokeWidth="2" /></svg>
          </div>
          <div className="flex h-[26px] items-center justify-center">
            <svg width="8" height="2"><path d="M0 1h8" stroke="#000" strokeWidth="2" /></svg>
          </div>
        </div>
        <div className="absolute left-[582px] top-[5px] flex h-[17px] w-[156px] overflow-hidden rounded-[5px] border border-[#8a8a8a] bg-gradient-to-b from-[#fafafa] to-[#dcdcdc] text-center text-[11.500px] leading-[14px] text-[#444]">
          <span className="w-[55px]">Oceans</span>
          <span className="w-[46px] bg-gradient-to-b from-[#5d9eea] to-[#3b74ce] font-bold text-white [text-shadow:0_-1px_1px_#234a88]">Topo</span>
          <span className="flex-1">Streets</span>
        </div>
      </div>
      <div className="px-[6px] font-['Inter']">
        <div className="h-[21px] text-[14.500px] leading-[18px] tracking-[0.3px] text-[#0000f0] underline">Mean_Income</div>
        <div className="flex h-[17px] w-[738px] border border-[#40485a]">
          <div className="w-[147px] border-r border-[#2b3f66] bg-[#cddaf4]" />
          <div className="w-[147px] border-r border-[#2b3f66] bg-[#9ab4ea]" />
          <div className="w-[147px] border-r border-[#2b3f66] bg-[#668fde]" />
          <div className="w-[147px] border-r border-[#0b2557] bg-[#336bd5]" />
          <div className="flex-1 bg-[#0045cb]" />
        </div>
        <div className="mt-[2px] flex justify-between pl-px pr-[3px] font-['Liberation_Sans'] text-[10px] leading-[12px] tracking-[0.1px] text-[#111]">
          <span>10,159.39</span>
          <span>85,056.3</span>
        </div>
      </div>
    </Panel>
  );
}

function Lines({ lines, className = '' }: { lines: string[]; className?: string }) {
  return (
    <div className={`pt-[4px] text-[12.500px] leading-[14px] text-[#111] ${className}`}>
      {lines.map((l, i) => (
        <div key={i} className="h-[14px] whitespace-nowrap">{l}</div>
      ))}
    </div>
  );
}

export default function App() {
  return (
    <div className="flex h-[909px] w-[1680px] flex-col overflow-hidden bg-[#f8f8f8] font-['Lato',sans-serif] text-black">
      <header className="flex h-6 shrink-0 items-start justify-between bg-[#105262] pl-[10px] pr-[14px] text-white">
        <div className="flex">
          <svg width="16" height="13" className="mt-[3px]"><path d="M0 1h16M0 6.500h16M0 12h16" stroke="#fff" strokeWidth="1.500" /></svg>
          <span className="ml-[15px] mt-[2px] text-[13.500px] font-bold leading-[17px]">Untitled Document</span>
        </div>
        <span className="mt-[4px] font-['Liberation_Sans'] text-[13px] font-bold leading-[17px]">Version 2.0 (0423)</span>
      </header>
      <nav className="flex h-[70px] shrink-0 justify-between border-b border-[#d6d6d6] bg-[#ebebeb]">
        <div className="flex w-[356px] border-r border-[#888] bg-white pl-[5px]">
          <Tool icon={<TableIcon />} label="Tables" />
          <Tool icon={<GraphIcon />} label="Graph" />
          <Tool icon={<MapIcon />} label="Map" />
          <Tool icon={<SliderIcon />} label="Slider" />
          <Tool icon={<CalcIcon />} label="Calc" />
          <Tool icon={<TextIcon />} label="Text" />
          <Tool icon={<ListIcon />} label="Plugins" />
        </div>
        <div className="flex pr-[15px]">
          <Tool icon={<UndoIcon />} label="Undo" className="w-[40px] text-[#888]" />
          <Tool icon={<UndoIcon flip />} label="Redo" className="mr-[15px] w-[40px] text-[#888]" />
          <Tool icon={<ListIcon />} label="Tiles" />
          <Tool icon={<GearIcon />} label="Options" />
          <Tool icon={<HelpIcon />} label="Help" />
        </div>
      </nav>
      <main className="flex flex-1 items-start gap-[10px] bg-[linear-gradient(90deg,#ebebeb_1px,transparent_1px),linear-gradient(90deg,#f1f1f1_1px,transparent_1px),linear-gradient(#efefef_1px,transparent_1px)] bg-[size:100px_100px,50px_50px,50px_50px] pt-[10px]">
        <div className="flex w-[575px] flex-col gap-[5px]">
          <CaseTable />
          <DotPlot />
        </div>
        <div className="flex w-[750px] flex-col gap-[5px]">
          <MapPanel />
          <div className="flex gap-[10px]">
            <Panel title="Overview" className="h-[160px] w-[235px] bg-white">
              <Lines className="pl-[6px]" lines={['These are data gathered from the', 'Minnesota Population Center in 2000. It', 'provides aggregate information for each', 'PUMA (a PUMA stands for Public Use', 'Microdata Aggregate). Play around with', 'the data by hovering over the column', 'headings (attributes) in the table to', 'discover more about your data set.']} />
            </Panel>
            <Panel title="Challenges" className="h-[160px] w-[505px] bg-white">
              <Lines className="pl-[5px] tracking-[0.05px]" lines={['1. Find the mean household income for your PUMA. How does this compare with the', 'national average?', '', '2. Play around with the graph by placing attributes on both the x and y axes to see what', 'you discover. You can either replace an attribute by dragging another into the yellow', 'space in the graph.', '', '3. Play around with the Map Data by placing attributes inside the map. What discoveries', 'and questions do you have?']} />
            </Panel>
          </div>
        </div>
      </main>
    </div>
  );
}
